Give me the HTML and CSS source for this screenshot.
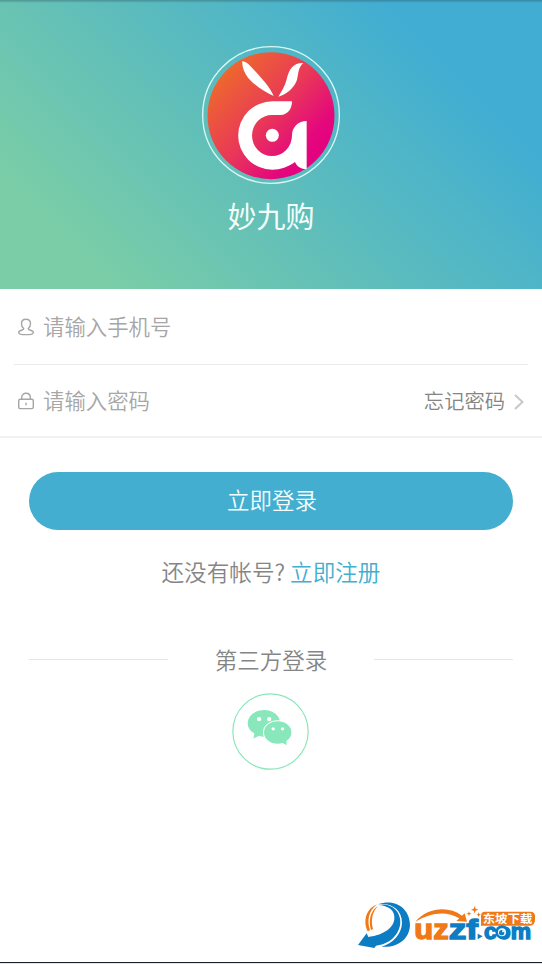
FILE: index.html
```html
<!DOCTYPE html>
<html lang="zh-CN">
<head>
<meta charset="utf-8">
<title>妙九购</title>
<link rel="stylesheet" href="styles.css">
</head>
<body>
<main class="screen">
  <header class="hero">
    <svg class="logo" viewBox="33 30 420 420">
      <defs>
        <linearGradient id="disc" x1="0.1" y1="0.15" x2="0.85" y2="0.85">
          <stop offset="0" stop-color="#ee6a2b"/>
          <stop offset="0.5" stop-color="#e93858"/>
          <stop offset="0.85" stop-color="#e4087c"/>
          <stop offset="1" stop-color="#e4007f"/>
        </linearGradient>
      </defs>
      <circle cx="243" cy="240" r="205" fill="none" stroke="#d9f8f5" stroke-width="4"/>
      <circle cx="243" cy="242" r="190.500" fill="url(#disc)"/>
      <g fill="#fff">
        <path d="M157 78C170 80 182 93 193 106C217 132 240 157 251 183C223 172 190 147 174 128C163 113 155 94 157 78Z"/>
        <path d="M340 84C324 99 326 113 321 134C314 158 286 180 265 185C275 169 286 151 290 133C297 101 311 83 340 84Z"/>
        <path d="M306 199C306 222 293 240 272 240H247A60 61.500 0 1 0 306 301C306 276 325 258 350 258V403C333 402 320 394 315 381C295 396 271 404 247 404A102.500 102.500 0 0 1 247 199Z"/>
        <circle cx="247" cy="301" r="19.500"/>
      </g>
    </svg>
    <h1 class="brand">妙九购</h1>
  </header>

  <form class="form">
    <label class="row">
      <svg class="field-icon" viewBox="0 0 16 18"><path d="M5.800 10.800C4.300 9.500 3.500 7.500 3.500 5.500C3.500 2.800 5.200 1.300 8 1.300S12.500 2.800 12.500 5.500C12.500 7.500 11.700 9.500 10.200 10.800C10.200 12.600 15.300 12 15.300 14.400C15.300 16.200 12 16.600 8 16.600S.7 16.200 .7 14.400C.7 12 5.800 12.600 5.800 10.800Z"/></svg>
      <span class="placeholder">请输入手机号</span>
    </label>
    <div class="row row-last">
      <svg class="field-icon" viewBox="0 0 16 18"><rect x=".7" y="7.300" width="14.600" height="9.300" rx="1.500"/><path d="M3.700 7.300V5.500C3.700 3 5.500 1.300 8 1.300S12.300 3 12.300 5.500V7.300M8 10.800V13.300"/></svg>
      <span class="placeholder">请输入密码</span>
      <a class="forgot">忘记密码</a>
      <svg class="chevron" viewBox="0 0 10 16"><path d="M1 1L8.500 8L1 15"/></svg>
    </div>
  </form>

  <button class="login">立即登录</button>
  <p class="signup">还没有帐号? <a class="signup-link">立即注册</a></p>

  <div class="divider"><span class="divider-text">第三方登录</span></div>
  <svg class="wechat" viewBox="67 159 230 230">
    <circle cx="182" cy="274" r="112.500" fill="#fff" stroke="#8ce5bb" stroke-width="3.500"/>
    <g fill="#88e8bc">
      <path d="M163 210C190 210 211 227 211 250S190 290 163 290Q154 290 148 287L131 295L134 280C122 273 114 262 114 250C114 227 136 210 163 210Z"/>
      <path stroke="#fff" stroke-width="3" d="M204 242C227 242 246 257 246 277C246 288 240 297 231 303L232 317L218 310Q211 312 204 312C180 312 161 297 161 277S180 242 204 242Z"/>
    </g>
    <g fill="#fff"><circle cx="148" cy="237" r="6.500"/><circle cx="178" cy="237" r="6.500"/><circle cx="190" cy="266" r="5"/><circle cx="218" cy="266" r="5"/></g>
  </svg>

  <footer class="footer">
    <svg class="watermark" viewBox="0 0 570 165">
      <path fill="#0c7cc3" d="M78 31C133 12 174 47 174 93C173 134 137 163 88 158C123 148 149 120 150 86C150 48 119 25 78 31Z"/>
      <path fill="#0c7cc3" d="M78 33C116 24 146 50 145 85C143 124 110 152 72 155L67 162L18 153L44 118L49 129C84 125 123 108 127 76C130 50 110 34 78 33Z"/>
      <path fill="#f07816" d="M75 31C43 44 32 80 47 112L54 109C45 82 48 52 75 31Z"/>
      <path fill="#f07816" d="M78 36C54 51 49 81 57 108L63 105C56 80 60 55 78 36Z"/>
      <path fill="#f07816" d="M190 83C226 42 288 34 330 65L338 58L345 83L313 81L322 73C282 48 233 57 190 83Z"/>
      <g fill="#f07816"><path d="M368 36l3 8 8 3-8 3-3 8-3-8-8-3 8-3ZM351 52l2 5 6 2-6 2-2 6-2-6-6-2 6-2ZM380 55l2 5 5 2-5 2-2 5-2-5-5-2 5-2Z"/><path d="M399 53H535Q549 53 549 67V77Q549 95 531 95H387V66Q387 53 399 53Z"/></g>
      <text class="mark-text" x="187" y="135" font-size="84" textLength="103" lengthAdjust="spacingAndGlyphs" fill="#f07816" stroke="#f07816">uz</text>
      <text class="mark-text" x="290" y="135" font-size="84" textLength="88" lengthAdjust="spacingAndGlyphs" fill="#0c7cc3" stroke="#0c7cc3">zf</text>
      <path fill="#0c7cc3" d="M377 119L392 127L377 136Z"/>
      <text class="mark-text" x="396" y="135" font-size="66" textLength="141" lengthAdjust="spacingAndGlyphs" fill="#0c7cc3" stroke="#0c7cc3">com</text>
      <circle cx="450" cy="114" r="20" fill="#0c7cc3"/><circle cx="450" cy="115" r="12" fill="#fff"/><circle cx="449" cy="116" r="8" fill="#0c7cc3"/><circle cx="453" cy="112" r="3" fill="#fff"/>
      <text class="mark-cn" x="392" y="87" font-size="35" textLength="149" lengthAdjust="spacingAndGlyphs">东坡下载</text>
    </svg>
    <div class="edge"></div>
  </footer>
</main>
</body>
</html>
```

FILE: styles.css
```css
* { box-sizing: border-box; }
body {
  margin: 0;
  background: #fff;
  font-family: "Noto Sans CJK SC", sans-serif;
  font-weight: 350;
  color: #858585;
}
.screen {
  width: 542px;
  height: 964px;
  display: flex;
  flex-direction: column;
  align-items: center;
  overflow: hidden;
}
.hero {
  width: 100%;
  height: 289px;
  flex: none;
  padding-top: 45px;
  display: flex;
  flex-direction: column;
  align-items: center;
  background:
    linear-gradient(rgba(40, 80, 90, .4), rgba(40, 80, 90, 0)) 0 0 / 100% 3px no-repeat,
    linear-gradient(225deg, #41add2 19%, #7acda6 86%);
}
.logo { width: 140px; height: 140px; flex: none; }
.brand {
  margin: 10px 0 0;
  font-size: 29px;
  line-height: 40px;
  font-weight: 400;
  color: #f4fffc;
}
.form { width: 100%; flex: none; border-bottom: 2px solid #f1f1f2; }
.row {
  height: 76px;
  margin: 0 14px;
  padding: 0 4px 0 4px;
  display: flex;
  align-items: center;
  border-bottom: 1px solid #ebebeb;
}
.row-last { height: 71px; border-bottom: 0; }
.field-icon {
  width: 16px;
  height: 18px;
  margin-right: 9px;
  fill: none;
  stroke: #a6a6a6;
  stroke-width: 1.4;
}
.placeholder { font-size: 21.4px; line-height: 30px; padding-bottom: 1px; color: #a6a6a6; }
.forgot { margin-left: auto; font-size: 20.3px; line-height: 30px; padding-bottom: 1px; color: #858585; }
.chevron {
  width: 10px;
  height: 16px;
  margin-left: 9px;
  margin-top: 2px;
  fill: none;
  stroke: #c7c7cc;
  stroke-width: 2;
}
.login {
  width: 484px;
  height: 58px;
  flex: none;
  margin-top: 34px;
  padding: 0 0 4px 2px;
  border: 0;
  border-radius: 29px;
  background: #43aed0;
  color: #f4ffff;
  font: inherit;
  font-size: 22.5px;
}
.signup { margin: 26px 0 0; font-size: 22.6px; line-height: 32px; white-space: nowrap; }
.signup-link { color: #43aed0; }
.divider {
  width: 484px;
  margin-top: 55px;
  display: flex;
  align-items: center;
  justify-content: space-between;
}
.divider::before, .divider::after {
  content: "";
  width: 139px;
  height: 1px;
  background: #e6e6e6;
}
.divider-text { font-size: 22.5px; line-height: 32px; }
.wechat { width: 77px; height: 77px; flex: none; margin: 18px 2px 0 0; }
.footer { width: 100%; margin-top: auto; display: flex; flex-direction: column; align-items: flex-end; }
.watermark { width: 190px; height: 55px; margin-bottom: 13px; }
.mark-text { font-family: "Liberation Sans", sans-serif; font-weight: 700; stroke-width: 4; }
.mark-cn { font-family: "Noto Sans CJK SC", sans-serif; font-weight: 700; fill: #fff; }
.edge { width: 100%; height: 2px; background: linear-gradient(#17202b 50%, #dfe5ec 50%); }
```
